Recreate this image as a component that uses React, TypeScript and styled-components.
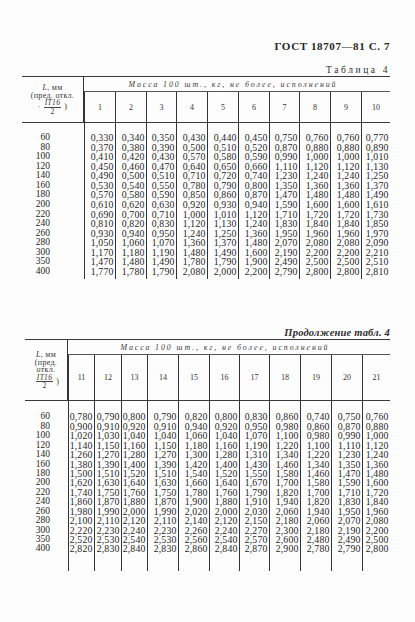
import React from 'react'
import styled, { createGlobalStyle } from 'styled-components'

const GlobalStyle = createGlobalStyle`
  html, body {
    margin: 0;
    padding: 0;
    background: #fdfdfd;
  }
  body {
    font-family: 'Liberation Serif', 'DejaVu Serif', serif;
    color: #262626;
  }
`

const LENGTHS = ['60', '80', '100', '120', '140', '160', '180', '200', '220', '240', '260', '280', '300', '350', '400']

// values by column, top to bottom in the order of LENGTHS
const TABLE_A: Record<string, string[]> = {
  '1': ['0,330', '0,370', '0,410', '0,450', '0,490', '0,530', '0,570', '0,610', '0,690', '0,810', '0,930', '1,050', '1,170', '1,470', '1,770'],
  '2': ['0,340', '0,380', '0,420', '0,460', '0,500', '0,540', '0,580', '0,620', '0,700', '0,820', '0,940', '1,060', '1,180', '1,480', '1,780'],
  '3': ['0,350', '0,390', '0,430', '0,470', '0,510', '0,550', '0,590', '0,630', '0,710', '0,830', '0,950', '1,070', '1,190', '1,490', '1,790'],
  '4': ['0,430', '0,500', '0,570', '0,640', '0,710', '0,780', '0,850', '0,920', '1,000', '1,120', '1,240', '1,360', '1,480', '1,780', '2,080'],
  '5': ['0,440', '0,510', '0,580', '0,650', '0,720', '0,790', '0,860', '0,930', '1,010', '1,130', '1,250', '1,370', '1,490', '1,790', '2,000'],
  '6': ['0,450', '0,520', '0,590', '0,660', '0,740', '0,800', '0,870', '0,940', '1,120', '1,240', '1,360', '1,480', '1,600', '1,900', '2,200'],
  '7': ['0,750', '0,870', '0,990', '1,110', '1,230', '1,350', '1,470', '1,590', '1,710', '1,830', '1,950', '2,070', '2,190', '2,490', '2,790'],
  '8': ['0,760', '0,880', '1,000', '1,120', '1,240', '1,360', '1,480', '1,600', '1,720', '1,840', '1,960', '2,080', '2,200', '2,500', '2,800'],
  '9': ['0,760', '0,880', '1,000', '1,120', '1,240', '1,360', '1,480', '1,600', '1,720', '1,840', '1,960', '2,080', '2,200', '2,500', '2,800'],
  '10': ['0,770', '0,890', '1,010', '1,130', '1,250', '1,370', '1,490', '1,610', '1,730', '1,850', '1,970', '2,090', '2,210', '2,510', '2,810'],
}

const TABLE_B: Record<string, string[]> = {
  '11': ['0,780', '0,900', '1,020', '1,140', '1,260', '1,380', '1,500', '1,620', '1,740', '1,860', '1,980', '2,100', '2,220', '2,520', '2,820'],
  '12': ['0,790', '0,910', '1,030', '1,150', '1,270', '1,390', '1,510', '1,630', '1,750', '1,870', '1,990', '2,110', '2,230', '2,530', '2,830'],
  '13': ['0,800', '0,920', '1,040', '1,160', '1,280', '1,400', '1,520', '1,640', '1,760', '1,880', '2,000', '2,120', '2,240', '2,540', '2,840'],
  '14': ['0,790', '0,910', '1,040', '1,150', '1,270', '1,390', '1,510', '1,630', '1,750', '1,870', '1,990', '2,110', '2,230', '2,530', '2,830'],
  '15': ['0,820', '0,940', '1,060', '1,180', '1,300', '1,420', '1,540', '1,660', '1,780', '1,900', '2,020', '2,140', '2,260', '2,560', '2,860'],
  '16': ['0,800', '0,920', '1,040', '1,160', '1,280', '1,400', '1,520', '1,640', '1,760', '1,880', '2,000', '2,120', '2,240', '2,540', '2,840'],
  '17': ['0,830', '0,950', '1,070', '1,190', '1,310', '1,430', '1,550', '1,670', '1,790', '1,910', '2,030', '2,150', '2,270', '2,570', '2,870'],
  '18': ['0,860', '0,980', '1,100', '1,220', '1,340', '1,460', '1,580', '1,700', '1,820', '1,940', '2,060', '2,180', '2,300', '2,600', '2,900'],
  '19': ['0,740', '0,860', '0,980', '1,100', '1,220', '1,340', '1,460', '1,580', '1,700', '1,820', '1,940', '2,060', '2,180', '2,480', '2,780'],
  '20': ['0,750', '0,870', '0,990', '1,110', '1,230', '1,350', '1,470', '1,590', '1,710', '1,830', '1,950', '2,070', '2,190', '2,490', '2,790'],
  '21': ['0,760', '0,880', '1,000', '1,120', '1,240', '1,360', '1,480', '1,600', '1,720', '1,840', '1,960', '2,080', '2,200', '2,500', '2,800'],
}

const Page = styled.div`
  width: 415px;
  height: 622px;
  box-sizing: border-box;
  padding: 40px 25px 0 22px;
  overflow: hidden;
`

const RunningHead = styled.div`
  text-align: right;
  font-size: 11px;
  font-weight: bold;
  letter-spacing: 0.6px;
  line-height: 12px;
`

const Caption = styled.div<{ $italic?: boolean; $gap: number }>`
  margin-top: ${(p) => p.$gap}px;
  text-align: right;
  font-size: ${(p) => (p.$italic ? 10.5 : 9.5)}px;
  line-height: 12px;
  font-style: ${(p) => (p.$italic ? 'italic' : 'normal')};
  font-weight: ${(p) => (p.$italic ? 'bold' : 'normal')};
  letter-spacing: ${(p) => (p.$italic ? 0.2 : 2.6)}px;
  color: #2e2e2e;
`

const Sheet = styled.div<{ $indent: number }>`
  margin-left: ${(p) => p.$indent}px;
  border-top: 1.5px solid #3a3a3a;
  width: max-content;
`

const Head = styled.div<{ $cols: string; $group: number; $nums: number }>`
  display: grid;
  grid-template-columns: ${(p) => p.$cols};
  grid-template-rows: ${(p) => p.$group}px ${(p) => p.$nums}px;
  border-bottom: 1.5px solid #3a3a3a;
`

const StubHead = styled.div`
  grid-row: 1 / span 2;
  grid-column: 1;
  display: flex;
  flex-direction: column;
  align-items: center;
  justify-content: center;
  border-right: 1px solid #333;
  font-size: 8px;
  line-height: 7.6px;
  letter-spacing: 0.3px;
  color: #333;
`

const Fraction = styled.span`
  display: inline-flex;
  flex-direction: column;
  align-items: center;
  font-size: 7.5px;
  line-height: 7.5px;
`

const Numerator = styled.span`
  font-style: italic;
  border-bottom: 0.8px solid #444;
  padding: 0 1px;
`

const FracRow = styled.span`
  display: flex;
  align-items: center;
  gap: 3px;
`

const GroupHead = styled.div`
  grid-row: 1;
  grid-column: 2 / -1;
  display: flex;
  align-items: center;
  justify-content: center;
  padding-right: 8px;
  border-bottom: 1px solid #555;
  font-style: italic;
  font-size: 7.9px;
  letter-spacing: 1.9px;
  color: #3a3a3a;
  white-space: nowrap;
`

const NumHead = styled.div`
  grid-row: 2;
  display: flex;
  align-items: center;
  justify-content: center;
  border-left: 1px solid #333;
  font-size: 8px;
  color: #333;
`

const Body = styled.div`
  display: flex;
`

const Column = styled.div<{ $width: number; $top: number; $bottom: number; $ruled?: boolean }>`
  box-sizing: border-box;
  width: ${(p) => p.$width}px;
  padding: ${(p) => p.$top}px ${(p) => (p.$ruled ? 1.5 : 0)}px ${(p) => p.$bottom}px 0;
  border-left: ${(p) => (p.$ruled ? '1px solid #333' : 'none')};
  display: flex;
  flex-direction: column;
  align-items: flex-end;
`

const RowLabel = styled.div<{ $height: number; $pad: number }>`
  height: ${(p) => p.$height}px;
  padding-right: ${(p) => p.$pad}px;
  font-size: 9.5px;
  line-height: ${(p) => p.$height}px;
`

const Value = styled.div<{ $height: number }>`
  height: ${(p) => p.$height}px;
  font-size: 9.8px;
  line-height: ${(p) => p.$height}px;
  letter-spacing: 0.15px;
  white-space: nowrap;
`

type TableProps = {
  data: Record<string, string[]>
  stubWidth: number
  colWidths: number[]
  indent: number
  labelPad: number
  groupHeight: number
  numHeight: number
  rowHeight: number
  topGap: number
  bottomGap: number
  tall?: boolean
}

const StubText = ({ tall }: { tall?: boolean }) => (
  <>
    <span>
      <i>L</i>, мм
    </span>
    {tall ? (
      <>
        <span>(пред.</span>
        <span>откл.</span>
      </>
    ) : (
      <span>(пред. откл.</span>
    )}
    <FracRow>
      <span>{tall ? '' : '·'}</span>
      <Fraction>
        <Numerator>IT16</Numerator>
        <span>2</span>
      </Fraction>
      <span>)</span>
    </FracRow>
  </>
)

const MassTable = ({
  data,
  stubWidth,
  colWidths,
  indent,
  labelPad,
  groupHeight,
  numHeight,
  rowHeight,
  topGap,
  bottomGap,
  tall,
}: TableProps) => {
  const cols = Object.keys(data)
  const template = [stubWidth, ...colWidths].map((w) => `${w}px`).join(' ')
  return (
    <Sheet $indent={indent}>
      <Head $cols={template} $group={groupHeight} $nums={numHeight}>
        <StubHead>
          <StubText tall={tall} />
        </StubHead>
        <GroupHead>Масса 100 шт., кг, не более, исполнений</GroupHead>
        {cols.map((c) => (
          <NumHead key={c}>{c}</NumHead>
        ))}
      </Head>
      <Body>
        <Column $width={stubWidth} $top={topGap} $bottom={bottomGap}>
          {LENGTHS.map((len) => (
            <RowLabel key={len} $height={rowHeight} $pad={labelPad}>
              {len}
            </RowLabel>
          ))}
        </Column>
        {cols.map((c, i) => (
          <Column key={c} $width={colWidths[i]} $top={topGap} $bottom={bottomGap} $ruled>
            {data[c].map((v, r) => (
              <Value key={r} $height={rowHeight}>
                {v}
              </Value>
            ))}
          </Column>
        ))}
      </Body>
    </Sheet>
  )
}

const App = () => (
  <Page>
    <GlobalStyle />
    <RunningHead>ГОСТ 18707—81 С. 7</RunningHead>
    <Caption $gap={12}>Таблица 4</Caption>
    <MassTable
      data={TABLE_A}
      stubWidth={62}
      colWidths={[31, 31, 30, 31, 31, 31, 30, 31, 31, 29]}
      indent={0}
      labelPad={34}
      groupHeight={15}
      numHeight={30}
      rowHeight={9.57}
      topGap={10}
      bottomGap={3}
    />
    <Caption $gap={48} $italic>
      Продолжение табл. 4
    </Caption>
    <MassTable
      data={TABLE_B}
      stubWidth={43}
      colWidths={[26, 27, 26, 31, 31, 30, 30, 31, 31, 31, 28]}
      indent={3}
      labelPad={18}
      groupHeight={15}
      numHeight={45}
      rowHeight={9.43}
      topGap={11}
      bottomGap={17}
      tall
    />
  </Page>
)

export default App
